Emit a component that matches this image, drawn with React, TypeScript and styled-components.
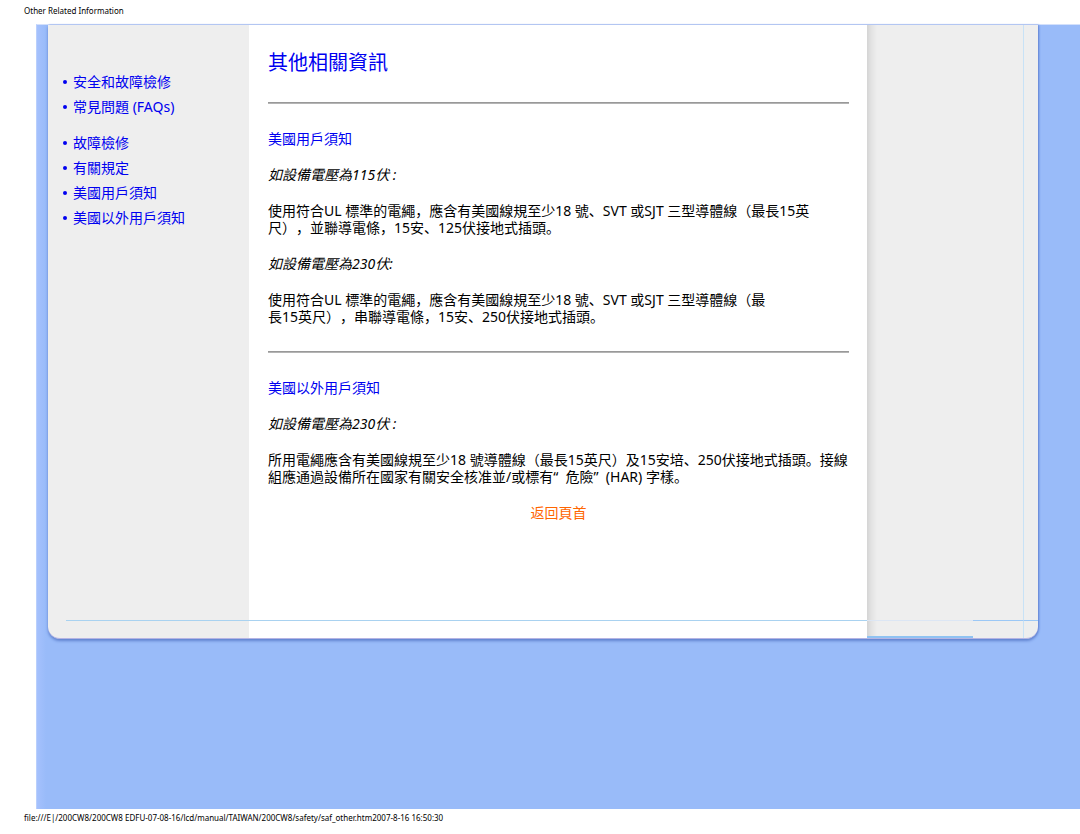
import React from "react";
import styled, { createGlobalStyle } from "styled-components";

const Global = createGlobalStyle`
  body {
    margin: 0;
    background: #fff;
    color: #000;
    font-family: "Noto Sans", "Noto Sans CJK SC", sans-serif;
    font-size: 14px;
    line-height: 17px;
    text-spacing-trim: space-all;
  }
`;

const Meta = styled.div`
  padding: 4px 24px 0;
  font-size: 8px;
  line-height: 14px;
`;

const PageHeader = styled(Meta).attrs({ as: "header" })`
  padding-bottom: 6px;
`;

const PageFooter = styled(Meta).attrs({ as: "footer" })`
  padding-top: 2px;
`;

const Backdrop = styled.div`
  margin-left: 36px;
  padding: 0 42px 170px 9px;
  background: #99bbf9 linear-gradient(to right, #a5c1fd, #99bbf9 9px);
  border-left: 1px solid #b9cffc;
  border-top: 1px solid #d3e0fb;
`;

const Panel = styled.div`
  margin-left: 2px;
  background: #eee;
  border-bottom: 1px solid #b4b4e4;
  border-radius: 0 0 12px 12px;
  box-shadow: 0 2px 3px #6284d0, 1px 0 2px #6a89dc;
  overflow: hidden;
`;

const Columns = styled.div`
  display: flex;
  min-height: 595px;
`;

const Sidebar = styled.nav`
  flex: 0 0 186px;
  padding: 44px 0 0 15px;
`;

const LinkList = styled.ul`
  list-style: none;
  margin: 0 0 11px;
  padding: 0;
`;

const LinkItem = styled.li`
  display: flex;
  align-items: center;
  height: 25px;
`;

const NavLink = styled.a`
  display: flex;
  align-items: center;
  gap: 6px;
  color: #0000f0;
  text-decoration: none;

  &::before {
    content: "";
    width: 4px;
    height: 4px;
    border-radius: 2px;
    background: #0000f0;
  }
`;

const Content = styled.main`
  flex: 1;
  padding: 25px 18px 0 19px;
  background: #fff;
`;

const Title = styled.h1`
  margin: 0;
  font-size: 20px;
  line-height: 26px;
  font-weight: 400;
  color: #0000f0;
`;

const Rule = styled.hr`
  margin: 26px 0;
  border: 0;
  height: 1px;
  background: #999;
  border-bottom: 1px solid #b4b4b4;
`;

const Heading = styled.h2`
  margin: 0 0 19px;
  font-size: 14px;
  font-weight: 400;
  color: #0000f0;
`;

const Text = styled.p<{ $italic?: boolean }>`
  margin: 0 0 19px;
  font-style: ${(p) => (p.$italic ? "italic" : "normal")};
`;

const BackToTop = styled.a`
  display: block;
  text-align: center;
  color: #ff6600;
  text-decoration: none;
`;

const RightColumn = styled.aside`
  display: flex;
  justify-content: flex-end;
  flex: 0 0 171px;
  background: linear-gradient(to right, #d4d4d4, #e2e2e2 4px, #eee 10px);
`;

const RightEdge = styled.div`
  width: 14px;
  border-left: 1px solid #c8e2f6;
`;

const Base = styled.div`
  display: flex;
  height: 18px;
`;

const BaseCell = styled.div<{ $width?: number; $line?: string; $fill?: string; $bottom?: string }>`
  box-sizing: border-box;
  flex: ${(p) => (p.$width ? `0 0 ${p.$width}px` : "1")};
  border-top: 1px solid ${(p) => p.$line ?? "transparent"};
  border-bottom: ${(p) => (p.$bottom ? `2px solid ${p.$bottom}` : "0")};
  background: ${(p) => p.$fill ?? "none"};
  background-clip: padding-box;
`;

const BaseEdge = styled(BaseCell)`
  border-left: 1px solid #c8e2f6;
`;

function Links({ items }: { items: [string, string][] }) {
  return (
    <LinkList>
      {items.map(([label, href]) => (
        <LinkItem key={label}>
          <NavLink href={href}>{label}</NavLink>
        </LinkItem>
      ))}
    </LinkList>
  );
}

export default function App() {
  return (
    <>
      <Global />
      <PageHeader>Other Related Information</PageHeader>
      <Backdrop id="top">
        <Panel>
          <Columns>
            <Sidebar>
              <Links
                items={[
                  ["安全和故障檢修", "#safety"],
                  ["常見問題 (FAQs)", "#faqs"],
                ]}
              />
              <Links
                items={[
                  ["故障檢修", "#troubleshooting"],
                  ["有關規定", "#regulatory"],
                  ["美國用戶須知", "#us"],
                  ["美國以外用戶須知", "#outside-us"],
                ]}
              />
            </Sidebar>
            <Content>
              <Title>其他相關資訊</Title>
              <Rule />
              <Heading id="us">美國用戶須知</Heading>
              <Text $italic>如設備電壓為115伏 :</Text>
              <Text>
                使用符合UL 標準的電繩，應含有美國線規至少18 號、SVT 或SJT 三型導體線（最長15英
                <br />
                尺），並聯導電條，15安、125伏接地式插頭。
              </Text>
              <Text $italic>如設備電壓為230伏:</Text>
              <Text>
                使用符合UL 標準的電繩，應含有美國線規至少18 號、SVT 或SJT 三型導體線（最
                <br />
                長15英尺），串聯導電條，15安、250伏接地式插頭。
              </Text>
              <Rule />
              <Heading id="outside-us">美國以外用戶須知</Heading>
              <Text $italic>如設備電壓為230伏 :</Text>
              <Text>
                所用電繩應含有美國線規至少18 號導體線（最長15英尺）及15安培、250伏接地式插頭。接線
                <br />
                組應通過設備所在國家有關安全核准並/或標有“&nbsp; 危險”&nbsp; (HAR) 字樣。
              </Text>
              <BackToTop href="#top">返回頁首</BackToTop>
            </Content>
            <RightColumn>
              <RightEdge />
            </RightColumn>
          </Columns>
          <Base>
            <BaseCell $width={18} />
            <BaseCell $width={183} $line="#a9d2f0" />
            <BaseCell $line="#a9d2f0" $fill="#fff" />
            <BaseCell
              $width={106}
              $line="#dce6f4"
              $bottom="#8fc2f2"
              $fill="linear-gradient(to right, #d4d4d4, #e2e2e2 4px, #eee 10px)"
            />
            <BaseCell $width={50} $line="#9cc8f6" />
            <BaseEdge $width={15} $line="#9cc8f6" />
          </Base>
        </Panel>
      </Backdrop>
      <PageFooter>
        file:///E|/200CW8/200CW8 EDFU-07-08-16/lcd/manual/TAIWAN/200CW8/safety/saf_other.htm2007-8-16 16:50:30
      </PageFooter>
    </>
  );
}
